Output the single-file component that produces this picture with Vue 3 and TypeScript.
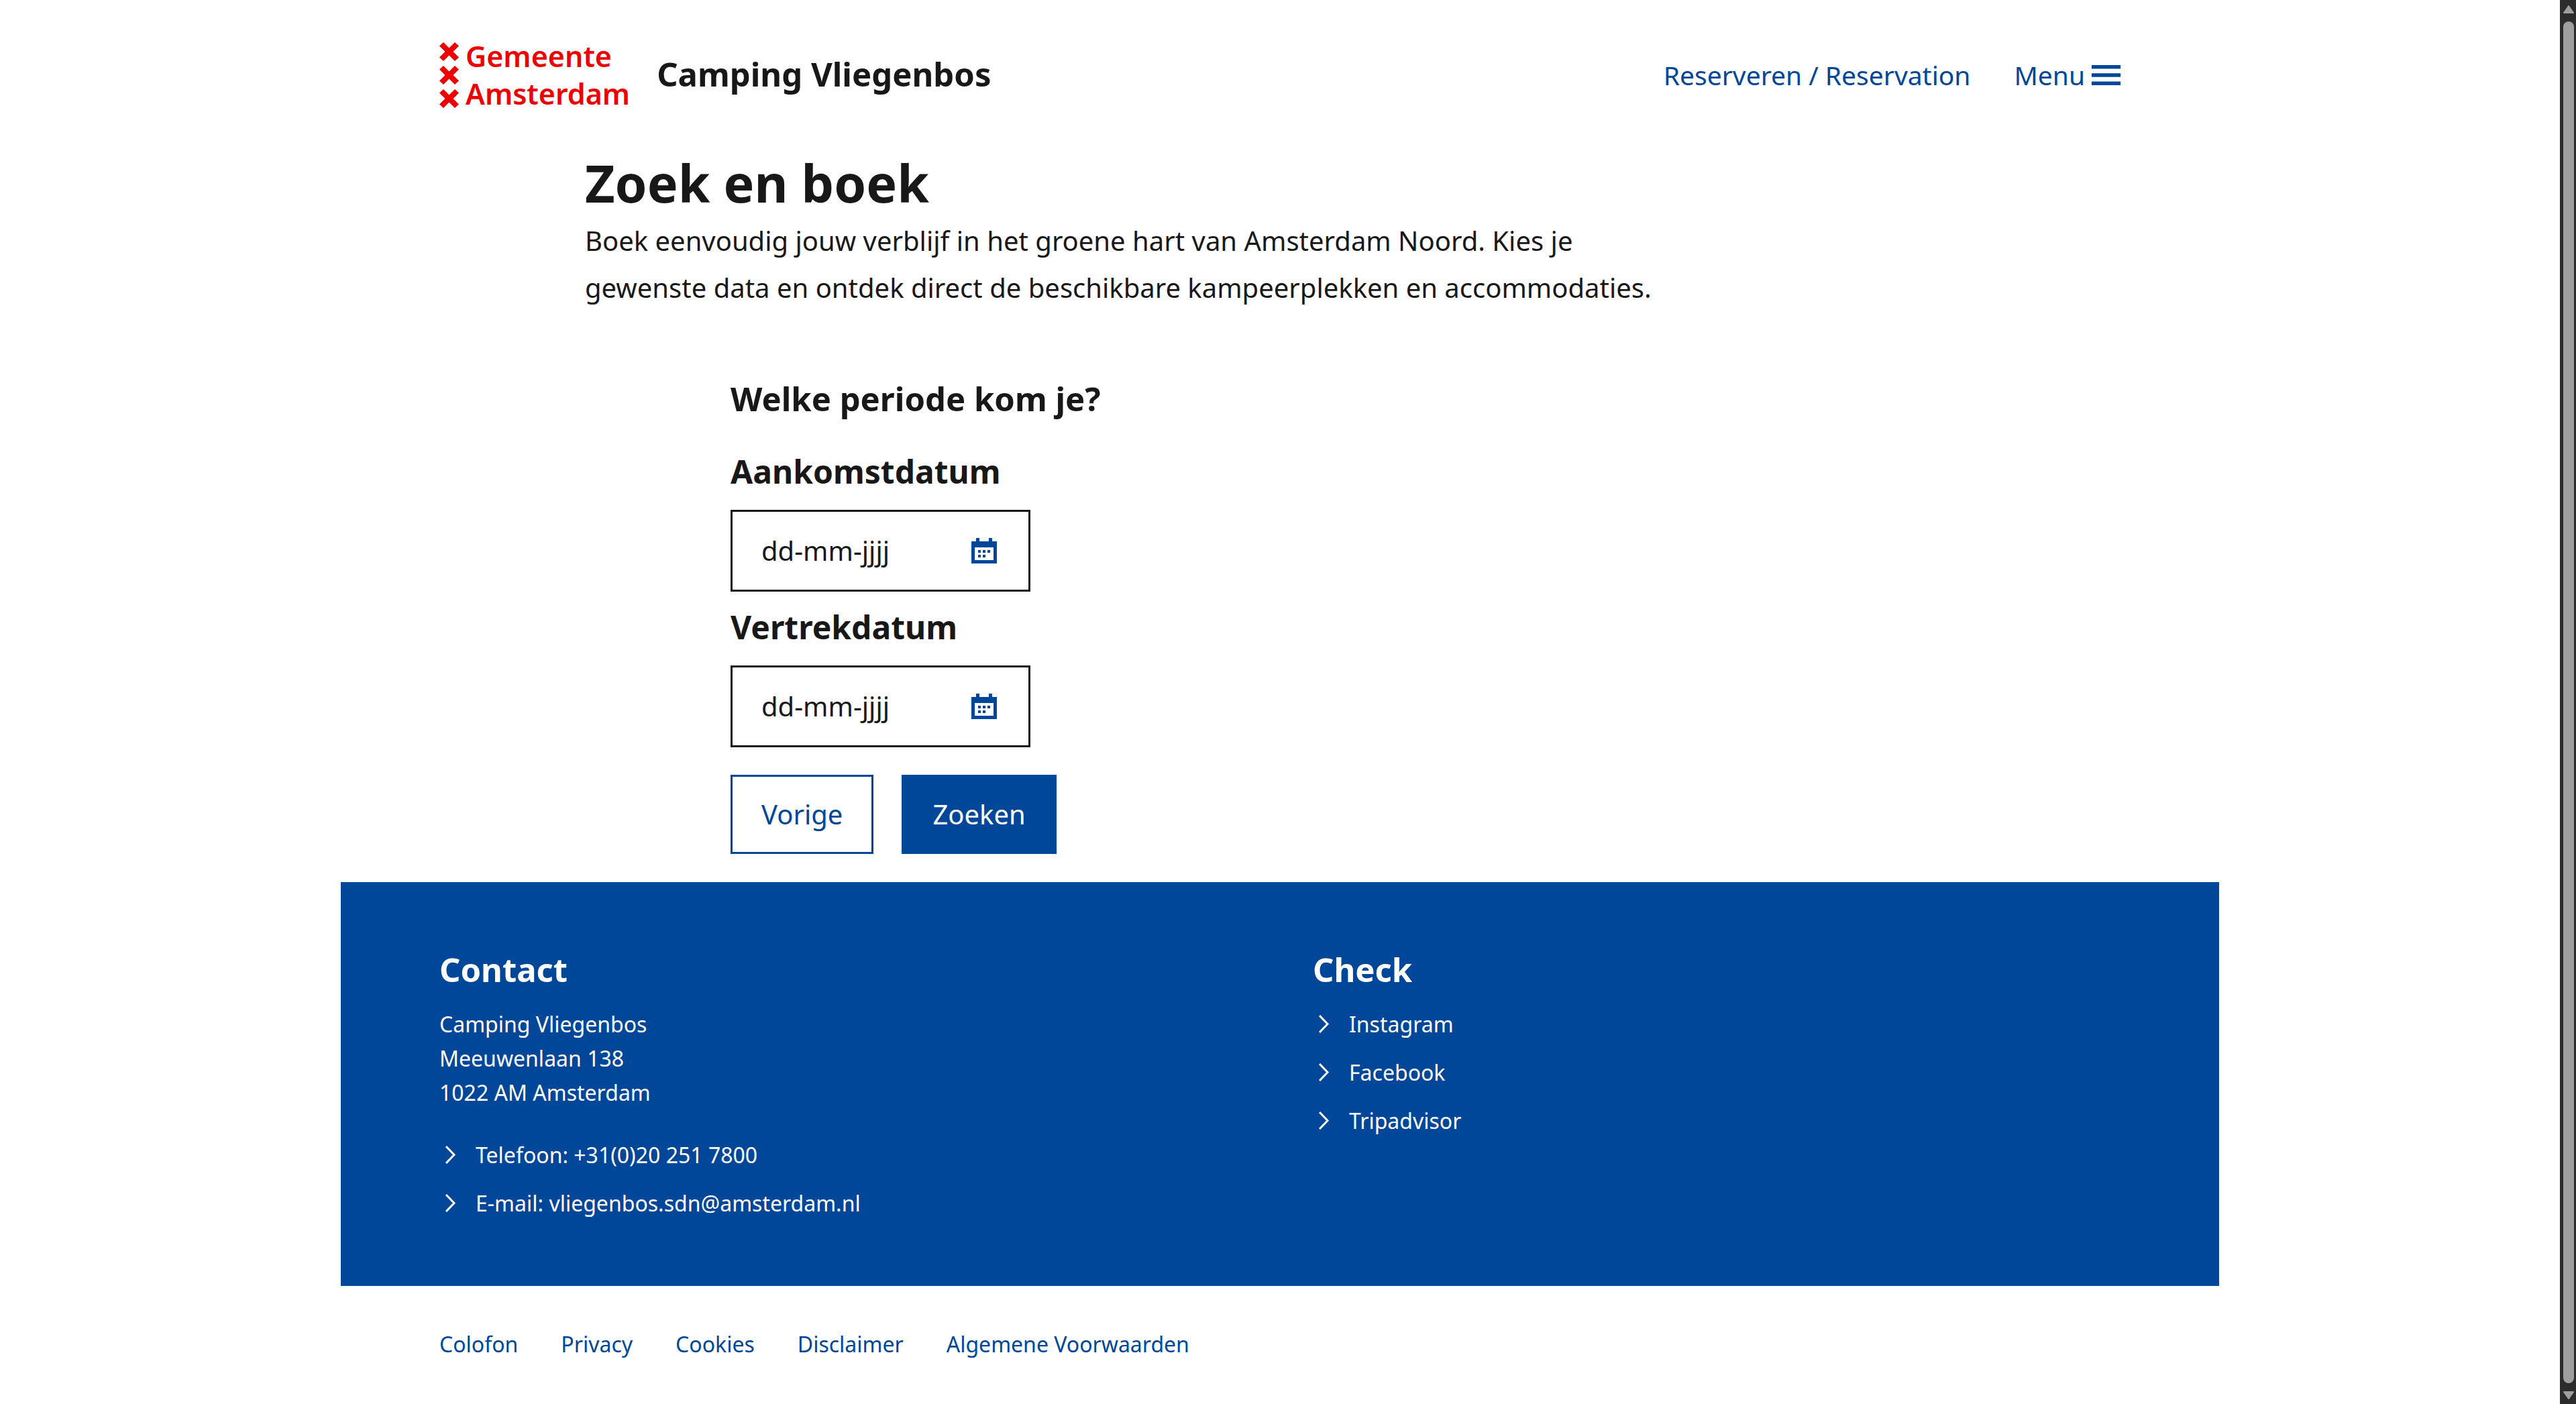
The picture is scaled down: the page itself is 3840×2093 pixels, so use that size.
<script setup lang="ts">
import { ref } from 'vue'

interface LinkItem {
  label: string
  href: string
}

interface DateField {
  id: string
  label: string
}

const dateFields: DateField[] = [
  { id: 'aankomst', label: 'Aankomstdatum' },
  { id: 'vertrek', label: 'Vertrekdatum' },
]

const dates = ref<Record<string, string>>({ aankomst: '', vertrek: '' })

const address: string[] = ['Camping Vliegenbos', 'Meeuwenlaan 138', '1022 AM Amsterdam']

const contactLinks: LinkItem[] = [
  { label: 'Telefoon: +31(0)20 251 7800', href: 'tel:+31202517800' },
  { label: 'E-mail: vliegenbos.sdn@amsterdam.nl', href: 'mailto:vliegenbos.sdn@amsterdam.nl' },
]

const socialLinks: LinkItem[] = [
  { label: 'Instagram', href: '#instagram' },
  { label: 'Facebook', href: '#facebook' },
  { label: 'Tripadvisor', href: '#tripadvisor' },
]

const legalLinks: LinkItem[] = [
  { label: 'Colofon', href: '#colofon' },
  { label: 'Privacy', href: '#privacy' },
  { label: 'Cookies', href: '#cookies' },
  { label: 'Disclaimer', href: '#disclaimer' },
  { label: 'Algemene Voorwaarden', href: '#voorwaarden' },
]
</script>

<template>
  <div class="viewport">
    <div class="page">
      <header class="header">
        <a class="logo" href="#home">
          <svg class="crosses" viewBox="0 0 29 98" aria-hidden="true">
            <path
              v-for="y in [0, 35, 70]"
              :key="y"
              :transform="`translate(0 ${y})`"
              d="M6 0 L14.500 8.500 L23 0 L29 5.500 L20.500 14 L29 22.500 L23 28 L14.500 19.500 L6 28 L0 22.500 L8.500 14 L0 5.500 Z"
            />
          </svg>
          <span class="logo-text"><span>Gemeente</span><span>Amsterdam</span></span>
        </a>
        <span class="site-name">Camping Vliegenbos</span>
        <nav class="main-nav">
          <a href="#reserveren">Reserveren / Reservation</a>
          <button type="button" class="menu-button">
            Menu
            <svg class="menu-icon" viewBox="0 0 43 30" aria-hidden="true">
              <path d="M0 0H43V5.400H0Z M0 12.300H43V17.700H0Z M0 24.600H43V30H0Z" />
            </svg>
          </button>
        </nav>
      </header>

      <main class="main">
        <section class="intro">
          <h1>Zoek en boek</h1>
          <p>
            Boek eenvoudig jouw verblijf in het groene hart van Amsterdam Noord. Kies je<br />
            gewenste data en ontdek direct de beschikbare kampeerplekken en accommodaties.
          </p>
        </section>

        <form class="booking" @submit.prevent>
          <h2>Welke periode kom je?</h2>
          <div v-for="field in dateFields" :key="field.id" class="field">
            <label :for="field.id">{{ field.label }}</label>
            <div class="date-box">
              <input :id="field.id" v-model="dates[field.id]" type="text" placeholder="dd-mm-jjjj" />
              <button type="button" class="picker" aria-label="Kies datum">
                <svg viewBox="0 0 38 38" aria-hidden="true">
                  <path
                    fill-rule="evenodd"
                    d="M7 0H12V5H26V0H31V5H38V38H0V5H7Z M5 14V33H33V14Z"
                  />
                  <path d="M10 18h4v4h-4Z M17 18h4v4h-4Z M24 18h4v4h-4Z M10 25h4v4h-4Z M17 25h4v4h-4Z" />
                </svg>
              </button>
            </div>
          </div>
          <div class="actions">
            <button type="button" class="button secondary">Vorige</button>
            <button type="submit" class="button primary">Zoeken</button>
          </div>
        </form>
      </main>

      <footer>
        <div class="footer-main">
          <section>
            <h2>Contact</h2>
            <address>
              <span v-for="line in address" :key="line">{{ line }}</span>
            </address>
            <ul class="link-list">
              <li v-for="link in contactLinks" :key="link.label">
                <a :href="link.href">
                  <svg viewBox="0 0 33 27" aria-hidden="true"><path d="M10 1 L22 13.500 L10 26" /></svg>
                  {{ link.label }}
                </a>
              </li>
            </ul>
          </section>
          <section>
            <h2>Check</h2>
            <ul class="link-list">
              <li v-for="link in socialLinks" :key="link.label">
                <a :href="link.href">
                  <svg viewBox="0 0 33 27" aria-hidden="true"><path d="M10 1 L22 13.500 L10 26" /></svg>
                  {{ link.label }}
                </a>
              </li>
            </ul>
          </section>
        </div>
        <nav class="legal">
          <a v-for="link in legalLinks" :key="link.label" :href="link.href">{{ link.label }}</a>
        </nav>
      </footer>
    </div>

    <div class="scrollbar" aria-hidden="true">
      <svg viewBox="0 0 16 12"><path d="M8 1 L15 11 H1 Z" /></svg>
      <div class="thumb"></div>
      <svg viewBox="0 0 16 12"><path d="M8 11 L1 1 H15 Z" /></svg>
    </div>
  </div>
</template>

<style>
body {
  margin: 0;
  background: #fff;
}
</style>

<style scoped>
.viewport {
  display: flex;
  align-items: flex-start;
  min-height: 100vh;
  color: #181818;
  font-family: 'Noto Sans', 'Open Sans', sans-serif;
  font-size: 40px;
  line-height: 70px;
}

.page {
  flex: 1;
  min-width: 0;
  max-width: 2800px;
  margin: 0 auto;
}

h1,
h2,
p,
ul {
  margin: 0;
  padding: 0;
}

ul {
  list-style: none;
}

a {
  color: inherit;
  text-decoration: none;
}

button,
input {
  font: inherit;
  color: inherit;
}

h2,
.field label,
.site-name {
  font-size: 49px;
  font-weight: 700;
  line-height: 64px;
}

.field label {
  font-size: 48px;
}

.header {
  display: flex;
  align-items: center;
  padding: 56px 147px 53px;
}

.logo {
  display: flex;
  align-items: center;
  gap: 10px;
  color: #ec0000;
}

.crosses {
  width: 29px;
  height: 98px;
  fill: currentColor;
}

.logo-text {
  display: flex;
  flex-direction: column;
  font-size: 43px;
  font-weight: 600;
  line-height: 56px;
}

.site-name {
  margin-left: 40px;
  padding-bottom: 4px;
}

.main-nav {
  display: flex;
  align-items: center;
  gap: 65px;
  margin-left: auto;
  color: #004699;
  font-size: 39px;
}

.menu-button {
  display: flex;
  align-items: center;
  gap: 10px;
  padding: 0;
  border: 0;
  background: none;
}

.menu-icon {
  width: 43px;
  height: 30px;
  fill: currentColor;
}

.main {
  padding: 0 147px 42px;
}

.intro {
  margin-left: 217px;
}

h1 {
  font-size: 77px;
  font-weight: 700;
  line-height: 103px;
}

.booking {
  margin-left: 434px;
  padding-top: 98px;
}

.booking h2 {
  margin-bottom: 45px;
}

.field {
  display: flex;
  flex-direction: column;
  align-items: flex-start;
  gap: 25px;
  margin-bottom: 21px;
}

.date-box {
  display: flex;
  align-items: center;
  box-sizing: border-box;
  width: 447px;
  height: 122px;
  padding: 0 47px 0 43px;
  border: 3px solid #181818;
}

.date-box input {
  flex: 1;
  min-width: 0;
  padding: 0;
  border: 0;
  outline: 0;
  background: none;
}

.date-box input::placeholder {
  color: #181818;
  opacity: 1;
}

.picker {
  display: flex;
  padding: 0;
  border: 0;
  background: none;
  color: #004699;
}

.picker svg {
  width: 38px;
  height: 38px;
  fill: currentColor;
}

.actions {
  display: flex;
  gap: 42px;
  padding-top: 20px;
}

.button {
  padding: 21px 43px;
  border: 3px solid #004699;
}

.secondary {
  background: #fff;
  color: #004699;
}

.primary {
  background: #004699;
  color: #fff;
}

.footer-main {
  display: grid;
  grid-template-columns: 1fr 1fr;
  column-gap: 98px;
  padding: 98px 147px;
  background: #004699;
  color: #fff;
  font-size: 32px;
  line-height: 51px;
}

.footer-main h2 {
  margin-bottom: 24px;
}

address {
  display: flex;
  flex-direction: column;
  margin-bottom: 42px;
  font-style: normal;
}

.link-list {
  display: flex;
  flex-direction: column;
  gap: 21px;
}

.link-list a {
  display: flex;
  align-items: center;
  gap: 21px;
}

.link-list svg {
  width: 33px;
  height: 27px;
  fill: none;
  stroke: currentColor;
  stroke-width: 3;
}

.legal {
  display: flex;
  gap: 64px;
  padding: 61px 147px 64px;
  color: #004699;
  font-size: 32px;
  line-height: 51px;
}

.scrollbar {
  position: sticky;
  top: 0;
  display: flex;
  flex-direction: column;
  align-items: center;
  gap: 12px;
  box-sizing: border-box;
  width: 24px;
  height: 100vh;
  padding: 8px 3px 7px 5px;
  background: #2c2c2c;
}

.scrollbar svg {
  width: 16px;
  height: 12px;
  fill: #9f9f9f;
  stroke: #9f9f9f;
  stroke-width: 2;
  stroke-linejoin: round;
}

.thumb {
  flex: 1;
  width: 16px;
  border-radius: 8px;
  background: #9f9f9f;
}
</style>
